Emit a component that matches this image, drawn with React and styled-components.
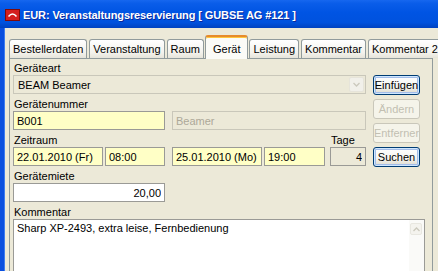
import React from 'react';
import styled, { createGlobalStyle } from 'styled-components';

const Global = createGlobalStyle`
  html, body { margin: 0; padding: 0; background: #ece9d8; }
  body {
    width: 438px; height: 271px; overflow: hidden;
    font-family: "Liberation Sans", Arial, sans-serif; font-size: 11px; color: #000;
  }
  * { box-sizing: border-box; }
`;

const FONT = `"Liberation Sans", Arial, sans-serif`;

const Window = styled.div`
  width: 438px;
  height: 271px;
  overflow: hidden;
  display: flex;
  flex-direction: column;
  background: #ece9d8;
`;

const TitleBar = styled.div`
  height: 28px;
  flex: none;
  display: flex;
  align-items: center;
  gap: 3px;
  padding: 1px 0 0 5px;
  background: linear-gradient(to bottom, #1667ef 0%, #0a5de9 12%, #0054e3 45%, #0052de 80%, #0042c0 100%);
  color: #fff;
  font-family: ${FONT};
  font-weight: bold;
  font-size: 11px;
  letter-spacing: -0.1px;
  white-space: nowrap;
  text-shadow: 1px 1px 0 #0a2a9c;
`;

const Body = styled.div`
  flex: 1;
  min-height: 0;
  display: flex;
  flex-direction: column;
  border-left: 4px solid #0a4fdf;
  box-shadow: inset 1px 0 0 #3d7cf0;
  padding: 7px 5px 0 5px;
`;

const TabRow = styled.div`
  display: flex;
  align-items: flex-end;
  gap: 2px;
  white-space: nowrap;
  position: relative;
  z-index: 1;
`;

const Tab = styled.div`
  flex: none;
  height: ${p => (p.$active ? '24px' : '19px')};
  margin: ${p => (p.$active ? '0 -1px -1px -1px' : '0')};
  padding: ${p => (p.$active ? '2px 7px 0' : '0 3px')};
  display: flex;
  align-items: center;
  border: 1px solid #919b9c;
  border-bottom: none;
  border-top: ${p => (p.$active ? '2px solid #e68b2c' : '1px solid #919b9c')};
  border-radius: 3px 3px 0 0;
  background: ${p => (p.$active ? '#fbfbf7' : 'linear-gradient(to bottom, #ffffff, #f3f2ec 70%, #e6e4da)')};
  box-shadow: ${p => (p.$active ? 'inset 0 1px 0 #ffc73c' : 'none')};
  font-family: ${FONT};
  font-size: 11px;
  line-height: 13px;
`;

const Panel = styled.div`
  flex: 1;
  border: 1px solid #919b9c;
  border-bottom: none;
  background: #ece9d8;
  padding: 3px 7px 0 3px;
  display: flex;
  flex-direction: column;
`;

const TopGrid = styled.div`
  display: grid;
  grid-template-columns: 353px 47px;
  column-gap: 7px;
`;

const Fields = styled.div`
  display: flex;
  flex-direction: column;
  gap: 4px;
`;

const Group = styled.div`
  display: flex;
  flex-direction: column;
`;

const Label = styled.div`
  height: 13px;
  line-height: 12px;
  padding-left: 1px;
  font-family: ${FONT};
  font-size: 11px;
  white-space: nowrap;
`;

const Row = styled.div`
  display: flex;
  gap: 7px;
`;

const Field = styled.input`
  width: ${p => p.$w}px;
  margin-left: ${p => p.$ml || 0}px;
  height: 19px;
  padding: 0 3px;
  border: 1px solid ${p => (p.$tone === 'disabled' ? '#c9c7ba' : '#9a9a96')};
  background: ${p =>
    p.$tone === 'yellow' ? '#ffffc6' : p.$tone === 'white' ? '#ffffff' : '#ece9d8'};
  color: ${p => (p.$tone === 'disabled' ? '#aca899' : '#000')};
  text-align: ${p => (p.$right ? 'right' : 'left')};
  font-family: ${FONT};
  font-size: 11px;
  outline: none;
  flex: none;
`;

const Combo = styled.div`
  height: 19px;
  display: flex;
  align-items: center;
  justify-content: space-between;
  border: 1px solid #c9c7ba;
  background: #ece9d8;
  padding: 0 1px 0 4px;
  font-family: ${FONT};
  font-size: 11px;
`;

const ComboButton = styled.div`
  width: 15px;
  height: 15px;
  display: flex;
  align-items: center;
  justify-content: center;
  background: #f1f0ea;
  border: 1px solid #e6e4da;
  border-radius: 2px;
`;

const ZeitGrid = styled.div`
  display: grid;
  grid-template-columns: 312px 36px;
  column-gap: 5px;
`;

const DateRow = styled.div`
  display: flex;
`;

const Buttons = styled.div`
  display: flex;
  flex-direction: column;
  gap: 4px;
  padding-top: 13px;
`;

const Button = styled.button`
  width: 47px;
  height: 20px;
  padding: 0;
  display: flex;
  align-items: center;
  justify-content: center;
  overflow: hidden;
  white-space: nowrap;
  font-family: ${FONT};
  font-size: 11px;
  border: 1px solid ${p => (p.disabled ? '#c9c7ba' : '#003c74')};
  border-radius: 3px;
  background: ${p =>
    p.disabled ? '#f5f4ea' : 'linear-gradient(to bottom, #ffffff, #f4f4ef 60%, #dcd8cc)'};
  color: ${p => (p.disabled ? '#c2bfb2' : '#000')};
  box-shadow: ${p => (p.$focus ? 'inset 0 0 0 1px #cee7ff, inset 0 0 0 2px #a3bce8' : 'none')};
`;

const CommentGroup = styled(Group)`
  margin-top: 4px;
  flex: 1;
`;

const Memo = styled.div`
  height: 80px;
  display: grid;
  grid-template-columns: 1fr 15px;
  border: 1px solid #9a9a96;
  background: #fff;
`;

const MemoText = styled.div`
  padding: 2px 3px;
  font-family: ${FONT};
  font-size: 11px;
  line-height: 13px;
  white-space: nowrap;
  overflow: hidden;
`;

const ScrollBar = styled.div`
  background: #fafaf8;
  padding: 3px 2px 0 1px;
`;

const ScrollButton = styled.div`
  height: 12px;
  display: flex;
  align-items: center;
  justify-content: center;
  border: 1px solid #e8e7e0;
  border-radius: 2px;
  background: #f4f3ee;
`;

const AppIcon = () => (
  <svg width="15" height="12" viewBox="0 0 15 12">
    <rect x="0.5" y="0.5" width="14" height="11" fill="#d41e1e" stroke="#7e0a0a" />
    <path d="M3.5 7.5 Q7.5 2.5 11.5 7.5" stroke="#fff" strokeWidth="1.6" fill="none" />
  </svg>
);

const Chevron = ({ up }) => (
  <svg width="7" height="5" viewBox="0 0 7 5">
    <path d={up ? 'M0.5 4 L3.5 1 L6.5 4' : 'M0.5 1 L3.5 4 L6.5 1'} stroke="#cbc9bd" strokeWidth="1.3" fill="none" />
  </svg>
);

const tabs = ['Bestellerdaten', 'Veranstaltung', 'Raum', 'Gerät', 'Leistung', 'Kommentar', 'Kommentar 2'];

export default function App() {
  return (
    <>
      <Global />
      <Window>
        <TitleBar>
          <AppIcon />
          <span>EUR: Veranstaltungsreservierung [ GUBSE AG #121 ]</span>
        </TitleBar>
        <Body>
          <TabRow>
            {tabs.map(t => (
              <Tab key={t} $active={t === 'Gerät'}>{t}</Tab>
            ))}
          </TabRow>
          <Panel>
            <TopGrid>
              <Fields>
                <Group>
                  <Label>Geräteart</Label>
                  <Combo>
                    <span>BEAM Beamer</span>
                    <ComboButton><Chevron /></ComboButton>
                  </Combo>
                </Group>
                <Group>
                  <Label>Gerätenummer</Label>
                  <Row>
                    <Field $w={152} $tone="yellow" readOnly value="B001" />
                    <Field $w={194} $tone="disabled" readOnly value="Beamer" />
                  </Row>
                </Group>
                <ZeitGrid>
                  <Label>Zeitraum</Label>
                  <Label>Tage</Label>
                  <DateRow>
                    <Field $w={90} $tone="yellow" readOnly value="22.01.2010 (Fr)" />
                    <Field $w={60} $ml={2} $tone="yellow" readOnly value="08:00" />
                    <Field $w={90} $ml={7} $tone="yellow" readOnly value="25.01.2010 (Mo)" />
                    <Field $w={61} $ml={2} $tone="yellow" readOnly value="19:00" />
                  </DateRow>
                  <Field $w={36} $tone="gray" $right readOnly value="4" />
                </ZeitGrid>
                <Group>
                  <Label>Gerätemiete</Label>
                  <Field $w={152} $tone="white" $right readOnly value="20,00" />
                </Group>
              </Fields>
              <Buttons>
                <Button $focus>Einfügen</Button>
                <Button disabled>Ändern</Button>
                <Button disabled>Entferner</Button>
                <Button $focus>Suchen</Button>
              </Buttons>
            </TopGrid>
            <CommentGroup>
              <Label>Kommentar</Label>
              <Memo>
                <MemoText>Sharp XP-2493, extra leise, Fernbedienung</MemoText>
                <ScrollBar>
                  <ScrollButton><Chevron up /></ScrollButton>
                </ScrollBar>
              </Memo>
            </CommentGroup>
          </Panel>
        </Body>
      </Window>
    </>
  );
}
